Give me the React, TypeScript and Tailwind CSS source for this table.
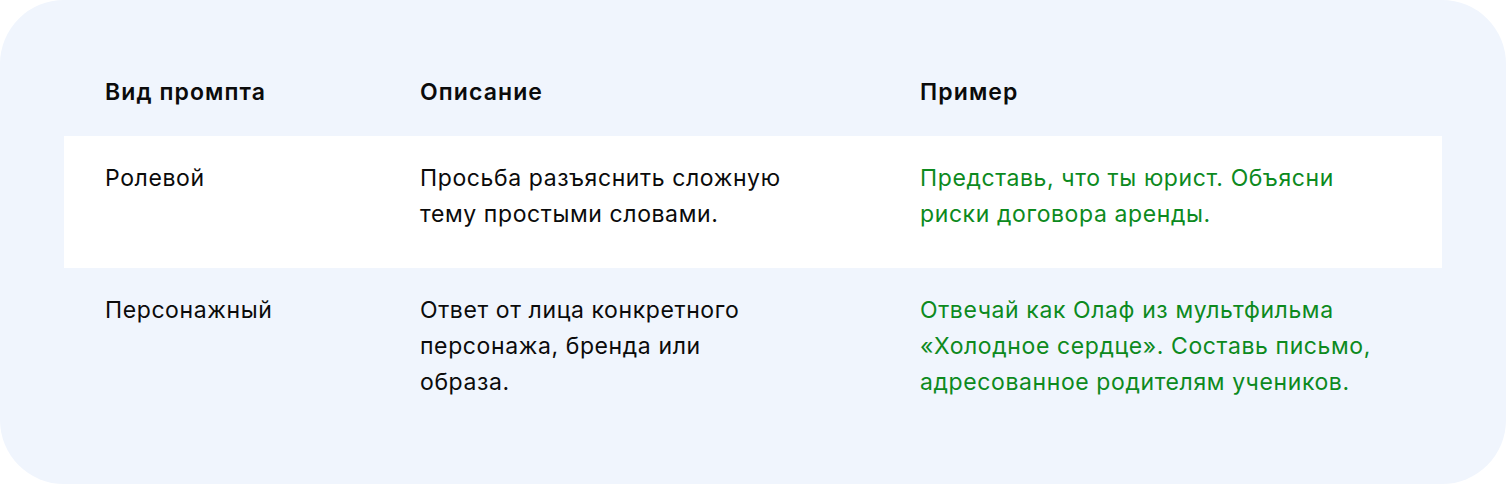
import React from 'react';

type Row = {
  kind: string;
  description: string;
  example: string;
};

const rows: Row[] = [
  {
    kind: 'Ролевой',
    description: 'Просьба разъяснить сложную тему простыми словами.',
    example: 'Представь, что ты юрист. Объясни риски договора аренды.',
  },
  {
    kind: 'Персонажный',
    description: 'Ответ от лица конкретного персонажа, бренда или образа.',
    example: 'Отвечай как Олаф из мультфильма «Холодное сердце». Составь письмо, адресованное родителям учеников.',
  },
];

export default function App() {
  return (
    <div className="w-[1506px] h-[484px] bg-white font-['Inter','Noto_Sans',sans-serif] text-[23px] leading-[36px] tracking-[0.6px] text-[#0b0b0b]">
      <div className="h-full rounded-[64px] bg-[#f0f5fd] pt-[74px] px-16">
        {/* Header */}
        <div className="grid grid-cols-[315px_500px_1fr] pb-[26px] font-semibold tracking-[1.1px]">
          <div className="pl-[41px]">Вид промпта</div>
          <div className="pl-[41px]">Описание</div>
          <div className="pl-[41px]">Пример</div>
        </div>

        {/* Rows */}
        {rows.map((row, i) => (
          <div
            key={row.kind}
            className={`grid grid-cols-[315px_500px_1fr] pt-6 pb-9 ${i % 2 === 0 ? 'bg-white' : ''}`}
          >
            <div className="pl-[41px]">{row.kind}</div>
            <div className="pl-[41px] pr-[91px]">{row.description}</div>
            <div className="pl-[41px] pr-[60px] text-[#0d8a1e]">{row.example}</div>
          </div>
        ))}
      </div>
    </div>
  );
}
